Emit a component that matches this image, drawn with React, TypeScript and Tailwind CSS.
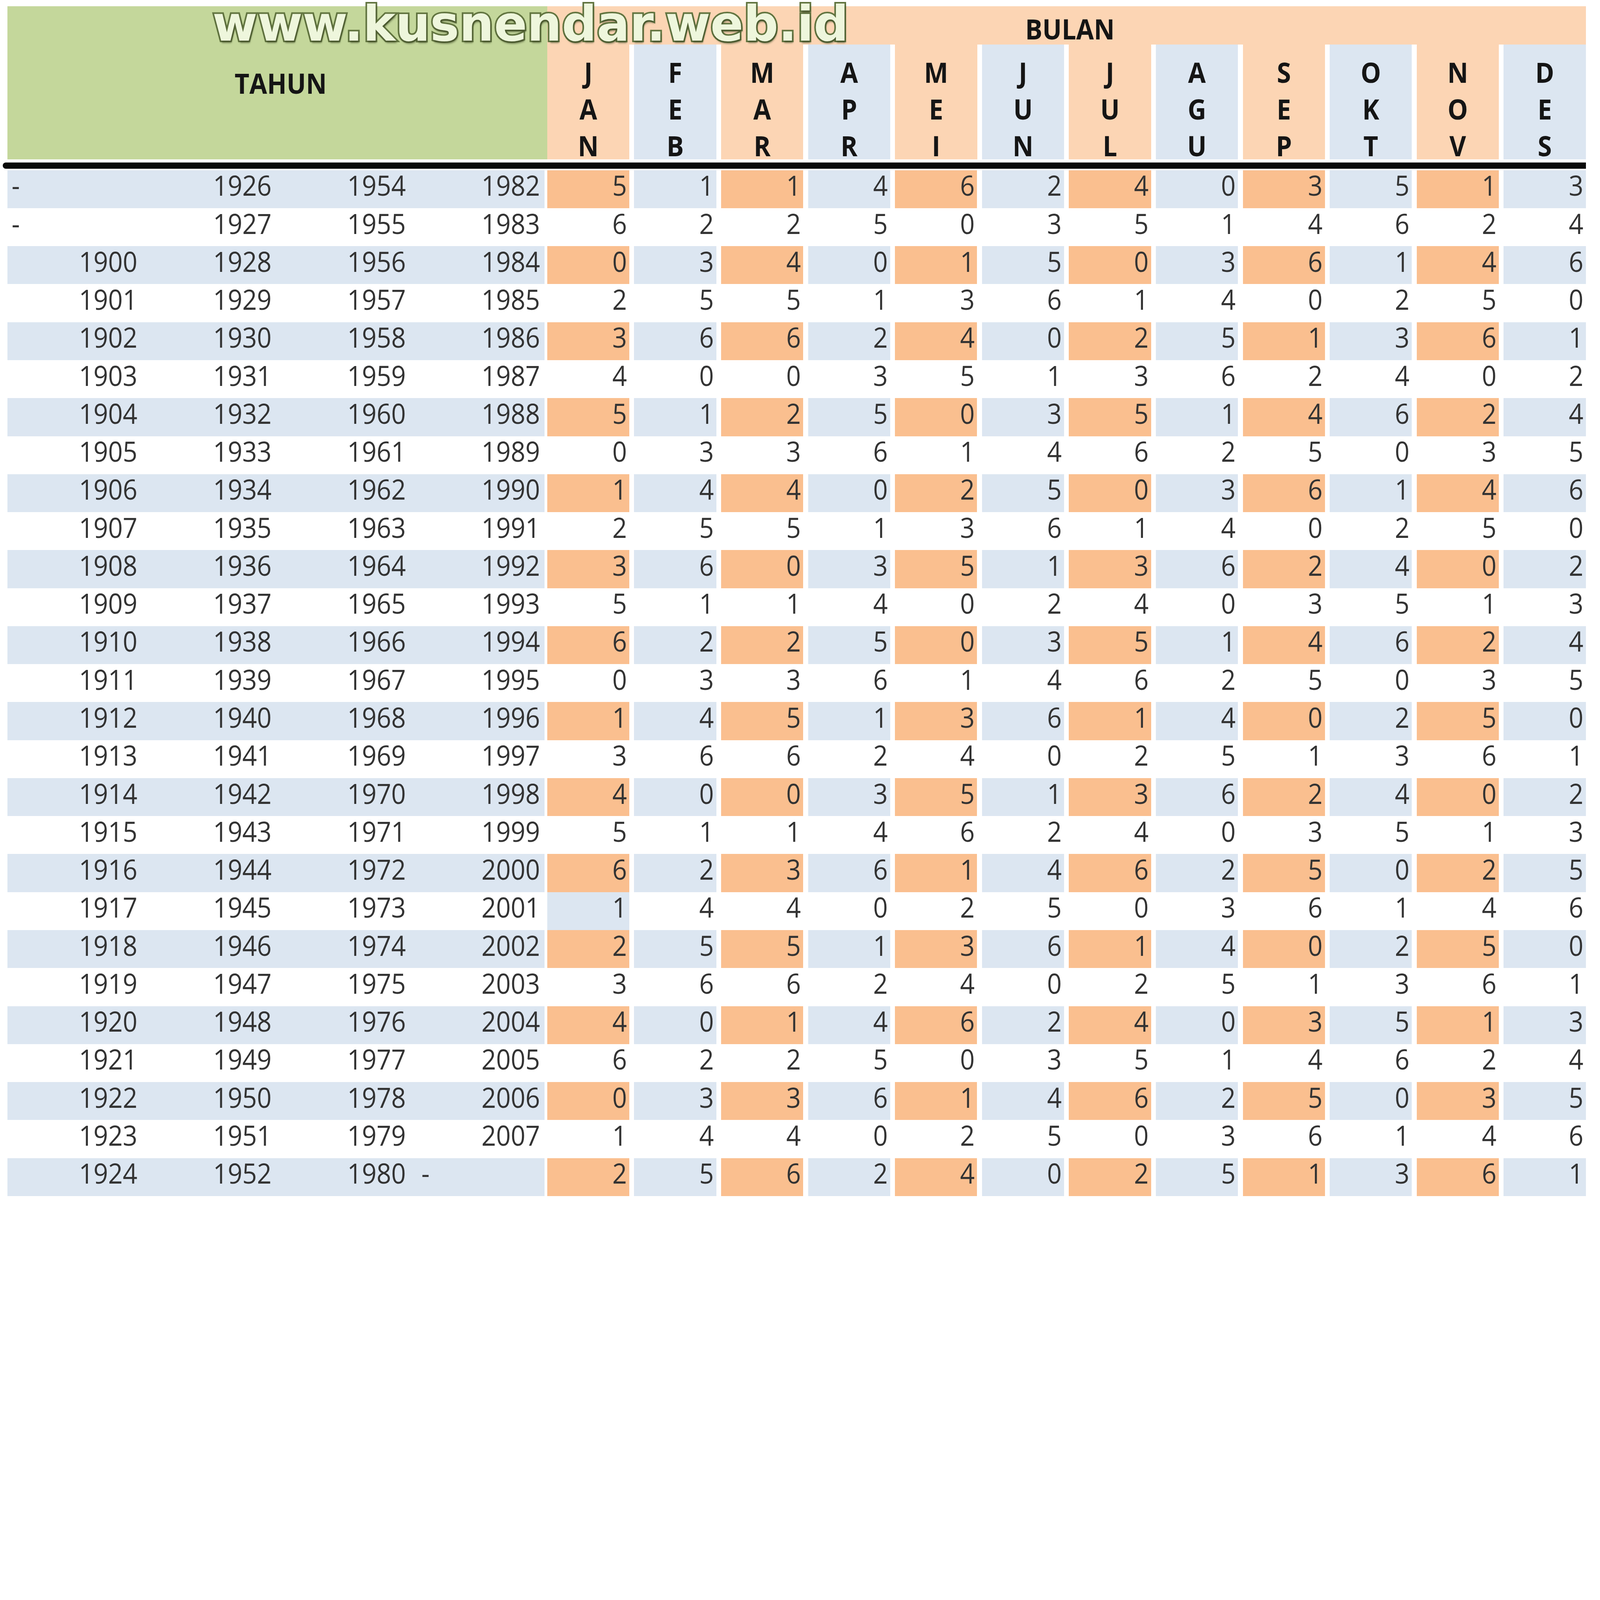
import React, { useEffect, useState } from "react";

type Row = [string, string, string, string, number[]];

const months = ["JAN", "FEB", "MAR", "APR", "MEI", "JUN", "JUL", "AGU", "SEP", "OKT", "NOV", "DES"];

const rows: Row[] = [
  ["-", "1926", "1954", "1982", [5, 1, 1, 4, 6, 2, 4, 0, 3, 5, 1, 3]],
  ["-", "1927", "1955", "1983", [6, 2, 2, 5, 0, 3, 5, 1, 4, 6, 2, 4]],
  ["1900", "1928", "1956", "1984", [0, 3, 4, 0, 1, 5, 0, 3, 6, 1, 4, 6]],
  ["1901", "1929", "1957", "1985", [2, 5, 5, 1, 3, 6, 1, 4, 0, 2, 5, 0]],
  ["1902", "1930", "1958", "1986", [3, 6, 6, 2, 4, 0, 2, 5, 1, 3, 6, 1]],
  ["1903", "1931", "1959", "1987", [4, 0, 0, 3, 5, 1, 3, 6, 2, 4, 0, 2]],
  ["1904", "1932", "1960", "1988", [5, 1, 2, 5, 0, 3, 5, 1, 4, 6, 2, 4]],
  ["1905", "1933", "1961", "1989", [0, 3, 3, 6, 1, 4, 6, 2, 5, 0, 3, 5]],
  ["1906", "1934", "1962", "1990", [1, 4, 4, 0, 2, 5, 0, 3, 6, 1, 4, 6]],
  ["1907", "1935", "1963", "1991", [2, 5, 5, 1, 3, 6, 1, 4, 0, 2, 5, 0]],
  ["1908", "1936", "1964", "1992", [3, 6, 0, 3, 5, 1, 3, 6, 2, 4, 0, 2]],
  ["1909", "1937", "1965", "1993", [5, 1, 1, 4, 0, 2, 4, 0, 3, 5, 1, 3]],
  ["1910", "1938", "1966", "1994", [6, 2, 2, 5, 0, 3, 5, 1, 4, 6, 2, 4]],
  ["1911", "1939", "1967", "1995", [0, 3, 3, 6, 1, 4, 6, 2, 5, 0, 3, 5]],
  ["1912", "1940", "1968", "1996", [1, 4, 5, 1, 3, 6, 1, 4, 0, 2, 5, 0]],
  ["1913", "1941", "1969", "1997", [3, 6, 6, 2, 4, 0, 2, 5, 1, 3, 6, 1]],
  ["1914", "1942", "1970", "1998", [4, 0, 0, 3, 5, 1, 3, 6, 2, 4, 0, 2]],
  ["1915", "1943", "1971", "1999", [5, 1, 1, 4, 6, 2, 4, 0, 3, 5, 1, 3]],
  ["1916", "1944", "1972", "2000", [6, 2, 3, 6, 1, 4, 6, 2, 5, 0, 2, 5]],
  ["1917", "1945", "1973", "2001", [1, 4, 4, 0, 2, 5, 0, 3, 6, 1, 4, 6]],
  ["1918", "1946", "1974", "2002", [2, 5, 5, 1, 3, 6, 1, 4, 0, 2, 5, 0]],
  ["1919", "1947", "1975", "2003", [3, 6, 6, 2, 4, 0, 2, 5, 1, 3, 6, 1]],
  ["1920", "1948", "1976", "2004", [4, 0, 1, 4, 6, 2, 4, 0, 3, 5, 1, 3]],
  ["1921", "1949", "1977", "2005", [6, 2, 2, 5, 0, 3, 5, 1, 4, 6, 2, 4]],
  ["1922", "1950", "1978", "2006", [0, 3, 3, 6, 1, 4, 6, 2, 5, 0, 3, 5]],
  ["1923", "1951", "1979", "2007", [1, 4, 4, 0, 2, 5, 0, 3, 6, 1, 4, 6]],
  ["1924", "1952", "1980", "-", [2, 5, 6, 2, 4, 0, 2, 5, 1, 3, 6, 1]],
];

const monthBg = (row: number, col: number) => {
  if (row % 2 === 1) {
    // one stray blue cell in the original sheet (2001 / JAN)
    return row === 19 && col === 0 ? "bg-[#dce6f1]" : "bg-white";
  }
  return col % 2 === 0 ? "bg-[#fabf8f]" : "bg-[#dce6f1]";
};

const YearCell = ({ value, col }: { value: string; col: number }) => {
  const dash = value === "-";
  return (
    <div
      className={`w-[671px] h-full flex items-center pb-[44px] ${
        dash ? (col === 3 ? "justify-start pl-[56px]" : "justify-start pl-[20px]") : "justify-end pr-[22px]"
      }`}
    >
      <span className="inline-block scale-y-110">{value}</span>
    </div>
  );
};

const App = () => {
  // the sheet is drawn at 8000px wide and fitted to whatever width the window has
  const [scale, setScale] = useState(() => (typeof window !== "undefined" ? window.innerWidth / 8000 : 1));

  useEffect(() => {
    const onResize = () => setScale(window.innerWidth / 8000);
    window.addEventListener("resize", onResize);
    return () => window.removeEventListener("resize", onResize);
  }, []);

  return (
    <div className="bg-white" style={{ zoom: scale }}>
      <div className="relative w-[8000px] h-[6011px] overflow-hidden bg-white font-['Open_Sans','Liberation_Sans',sans-serif] font-medium text-[128px] leading-none text-[#333]">
        <div className="pl-[38px] pt-[32px] w-[7929px]">
          {/* header */}
          <div className="flex h-[764px]">
            <div className="w-[2698px] bg-[#c4d79b] pl-[1135px] pt-[318px]">
              <span className="inline-block scale-y-110 font-bold text-[#151515]">TAHUN</span>
            </div>
            <div className="w-[5193px] flex flex-col">
              <div className="h-[190px] bg-[#fcd5b4] pl-[2390px] pt-[46px]">
                <span className="inline-block scale-y-110 font-bold text-[#151515]">BULAN</span>
              </div>
              <div className="grid grid-cols-12 gap-x-[24px] h-[574px]">
                {months.map((m, i) => (
                  <div
                    key={m}
                    className={`flex flex-col items-center gap-[56px] pt-[72px] font-bold text-[#151515] ${
                      i % 2 === 0 ? "bg-[#fcd5b4]" : "bg-[#dce6f1]"
                    }`}
                  >
                    {m.split("").map((ch, k) => (
                      <span key={k} className="inline-block scale-y-110">
                        {ch}
                      </span>
                    ))}
                  </div>
                ))}
              </div>
            </div>
          </div>

          <div className="h-[16px]" />
          <div className="-ml-[25px] w-[7916px] h-[31px] bg-[#0a0a0a] rounded-l-full" />
          <div className="h-[8px]" />

          {/* body */}
          {rows.map((r, ri) => (
            <div key={ri} className="flex h-[190px]">
              <div className={`flex ${ri % 2 === 0 ? "bg-[#dce6f1]" : "bg-white"}`}>
                {[r[0], r[1], r[2], r[3]].map((v, ci) => (
                  <YearCell key={ci} value={v} col={ci} />
                ))}
              </div>
              <div className="w-[14px]" />
              <div className="w-[5193px] grid grid-cols-12 gap-x-[24px]">
                {r[4].map((n, ci) => (
                  <div
                    key={ci}
                    className={`flex items-center justify-end pr-[12px] pb-[44px] ${monthBg(ri, ci)}`}
                  >
                    <span className="inline-block scale-y-110">{n}</span>
                  </div>
                ))}
              </div>
            </div>
          ))}
        </div>

        {/* watermark */}
        <div className="absolute left-[1062px] top-[10px] font-['DejaVu_Sans','Verdana',sans-serif] font-bold text-[244px] leading-[220px] text-[#eef6dc] [-webkit-text-stroke:16px_#627540] [paint-order:stroke_fill] [text-shadow:4px_12px_8px_rgba(60,72,36,0.6)]">
          www.kusnendar.web.id
        </div>
      </div>
    </div>
  );
};

export default App;
